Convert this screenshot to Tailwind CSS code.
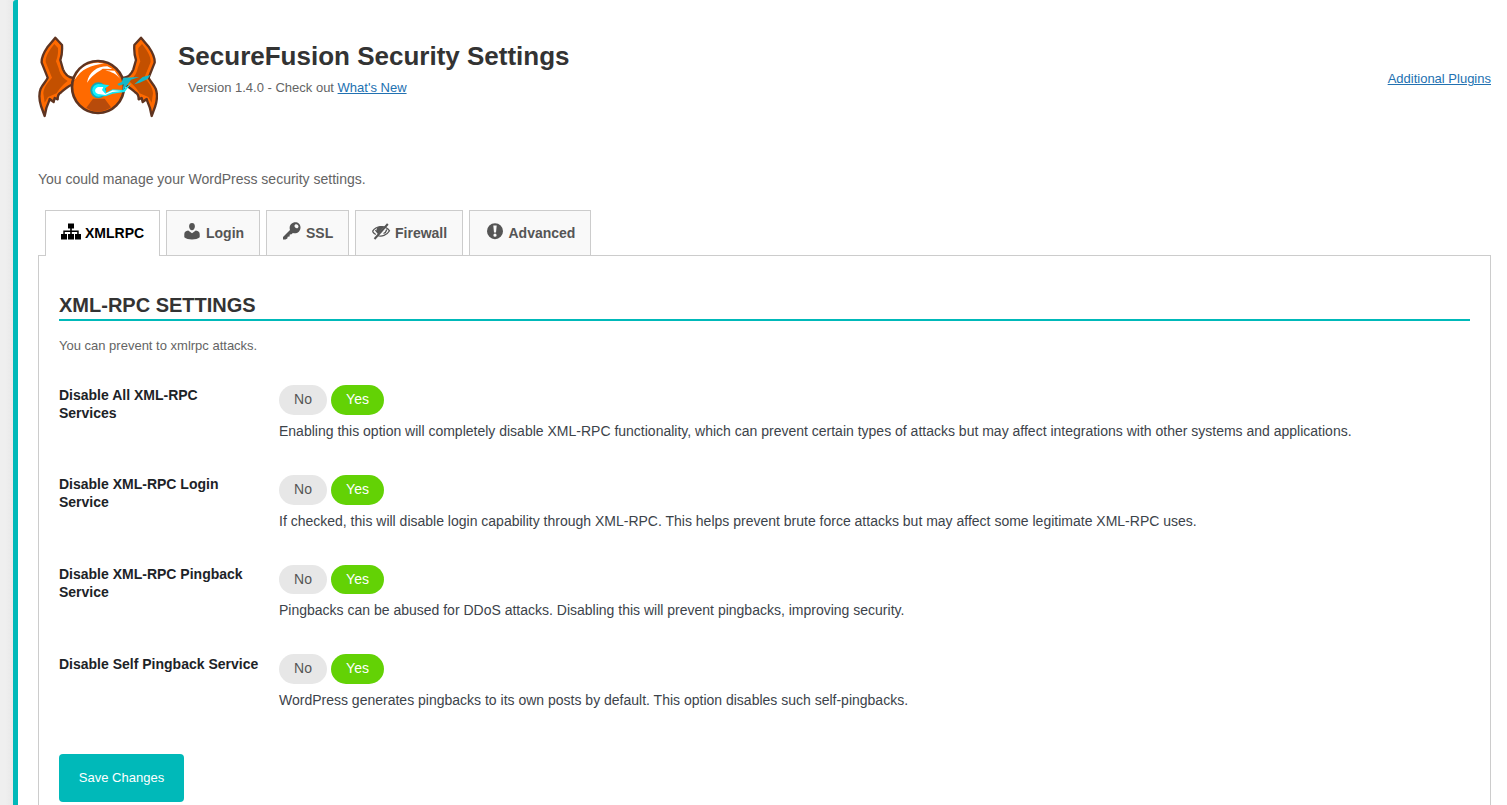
<!DOCTYPE html>
<html lang="en">
<head>
<meta charset="utf-8">
<title>SecureFusion Security Settings</title>
<script src="https://cdn.jsdelivr.net/npm/@tailwindcss/browser@4"></script>
</head>
<body class="bg-[#efefef] font-['Liberation_Sans',Arial,sans-serif] text-[#3c434a] overflow-hidden">
<div class="flex h-[805px] overflow-hidden">
  <div class="w-[13px] shrink-0 bg-linear-to-r from-[#efefef] from-40% to-[#e9e9e9]"></div>
  <main class="grow rounded-tl-[3px] border-l-[5px] border-[#00b9b9] bg-white pl-5 pr-4">
    <header class="flex h-[170px] pt-9">
      <svg class="h-[82px] w-[120px] shrink-0" viewBox="24 18 360 246">
        <defs>
          <g id="wing">
            <path stroke="#5f3420" stroke-width="7" stroke-linejoin="round" fill="#ff6a00" d="M76 23 L52 52 C41 68 34 82 35 98 L53 143 C52 150 39 162 32 176 C26 192 28 212 33 228 L44 258 C47 238 51 226 57 214 L59 207 L71 216 L74 204 L83 208 C83 197 86 191 92 188 C101 182 113 166 130 163 L130 144 C114 142 104 131 99 118 L91 90 C96 76 97 60 96 45Z"/>
            <path fill="#c35000" d="M73 42 C59 59 46 79 47 96 L66 143 C52 158 41 173 40 190 L44 218 L54 201 L68 195 L80 190 C86 180 94 168 113 153 C98 145 89 131 86 115 L78 94 C84 78 85 64 84 54Z"/>
          </g>
        </defs>
        <use href="#wing"/>
        <use href="#wing" transform="translate(409 0) scale(-1 1)"/>
        <circle cx="204" cy="171" r="78" fill="#ff6a00" stroke="#5f3420" stroke-width="8"/>
        <path fill="#b84b0b" d="M189 206 L224 206 L243 232 Q204 258 169 233Z"/>
        <path fill="#fff" d="M133 151 C143 117 170 98 204 98 L222 101 C184 105 153 116 133 151Z M171 158 C177 126 201 109 232 109 L247 117 L218 116 C212 123 192 127 171 158Z"/>
        <path fill="#fff" d="M226 121 L254 122 L270 146 C258 132 246 126 226 121Z"/>
        <circle cx="205" cy="181" r="24" fill="#14a7b5"/>
        <circle cx="206" cy="181" r="19" fill="#13f0ff"/>
        <path fill="#12e9f5" d="M211 162 L238 166 L224 176 L229 188 L248 178 L278 180 L304 160 L284 186 L248 191 L227 199 L207 197Z"/>
        <path fill="#fff" d="M204 171 L220 171 L216 180 L226 191 L248 181 L274 183 L247 186 L226 195 L204 192 C192 188 193 175 204 171Z"/>
        <path fill="#14b8c9" d="M262 162 L275 156 L280 143 L328 141 L303 149 L290 167 L277 182 L281 163 L267 167Z M313 163 L338 141 L361 135 L353 147 L329 158Z"/>
      </svg>
      <div class="ml-5 grow pt-1">
        <h1 class="text-[26px] leading-8 font-bold text-[#333]">SecureFusion Security Settings</h1>
        <p class="mt-[6px] ml-[10px] text-[13px] leading-5 text-[#646464]">Version 1.4.0 - Check out <a class="text-[#2271b1] underline" href="#">What's New</a></p>
      </div>
      <a class="mt-[33px] h-5 text-[13px] leading-5 text-[#2271b1] underline" href="#">Additional Plugins</a>
    </header>
    <p class="h-10 text-sm leading-[19px] text-[#646464]">You could manage your WordPress security settings.</p>
    <nav class="relative z-10 -mb-px ml-[7px] flex h-[46px] items-start gap-[6px] text-sm font-bold text-[#555]">
      <a class="flex h-[46px] w-[115px] items-center border border-b-0 border-[#ccc] bg-white pb-px pl-[15px] text-black" href="#">
        <svg class="mb-[3px] h-5 w-5" viewBox="0 0 20 20" fill="currentColor"><path d="M7 1.500h6v5H7zM9.200 6h1.600v7H9.200zM2.300 8.500h15.400V10H2.300zM2.300 9h1.500v4H2.300zM16.200 9h1.500v4h-1.500zM0 12h6v5.500H0zM7 12h6v5.500H7zM14 12h6v5.500h-6z"/></svg>
        <span class="ml-1">XMLRPC</span></a>
      <a class="flex h-[45px] w-[94px] items-center border border-b-0 border-[#ccc] bg-[#f9f9f9] pl-[15px]" href="#">
        <svg class="mb-[3px] h-5 w-5" viewBox="0 0 20 20" fill="currentColor"><path d="M7.100 4.300C7.100 2.200 8.200 1 10 1s2.900 1.200 2.900 3.300S11.700 8.300 10 8.300 7.100 6.400 7.100 4.300ZM6.200 8.600 10 11.200l3.800-2.600c2.700.3 3.900 1.700 3.900 3.700v2.900c-1.800 1.500-4.600 2.200-7.700 2.200s-5.900-.7-7.700-2.200v-2.900c0-2 1.200-3.400 3.900-3.700Z"/></svg>
        <span class="ml-1">Login</span></a>
      <a class="flex h-[45px] w-[83px] items-center border border-b-0 border-[#ccc] bg-[#f9f9f9] pl-[15px]" href="#">
        <svg class="mb-[3px] h-5 w-5" viewBox="0 0 20 20" fill="currentColor"><path fill-rule="evenodd" d="M17 1.800c2.100 2.100 2 5.700-.2 7.900-1.700 1.600-4 2-5.900 1.200L9.500 12.300l-1.700.2-.3 2-1.800.2-.4 1.700L3.500 17.500H1v-2.600L8 8C7.300 6 7.600 3.700 9.200 2.100c2.200-2.200 5.700-2.400 7.800-.3Zm-1.200 1.200c-.8-.8-2-.9-2.800-.2s-.6 1.900.2 2.700 2 1 2.800.2.600-1.900-.2-2.700Z"/></svg>
        <span class="ml-1">SSL</span></a>
      <a class="flex h-[45px] w-[108px] items-center border border-b-0 border-[#ccc] bg-[#f9f9f9] pl-[15px]" href="#">
        <svg class="mb-[3px] h-5 w-5" viewBox="0 0 20 20" fill="none" stroke="currentColor"><path stroke-width="1.300" d="M1.500 9.300C5 3.500 14.500 2.700 18.500 8.800 15.800 13.500 10.500 15 6.500 13.500M1.500 9.300c.8 1.300 2 2.500 3.300 3.200M4.500 8c.8 1.700 1.800 2.700 3.200 3.300M15.800 7.500c-.5 2-1.600 3.400-3.300 4"/><path fill="currentColor" stroke="none" d="M5.500 7.500C6 5 8.500 3.800 11 4.100l2 .9-6 7C5.800 10.800 5.200 9 5.500 7.500Z"/><path stroke-width="2" d="M3.500 17 16.800 2"/></svg>
        <span class="ml-1">Firewall</span></a>
      <a class="flex h-[45px] w-[122px] items-center border border-b-0 border-[#ccc] bg-[#f9f9f9] pl-[15px]" href="#">
        <svg class="mb-[3px] h-5 w-5" viewBox="0 0 20 20" fill="currentColor"><path fill-rule="evenodd" d="M10 1.200a8 8 0 1 1 0 16 8 8 0 0 1 0-16ZM8.300 3.500 9 10.500h2l.7-7Zm1.700 8.100a1.600 1.600 0 1 0 0 3.200 1.600 1.600 0 0 0 0-3.200Z"/></svg>
        <span class="ml-[3.500px]">Advanced</span></a>
    </nav>
    <section class="h-[600px] border border-[#ccc] px-5 pt-[34px]">
      <h2 class="h-[31px] border-b-2 border-[#00b9b9] text-xl leading-[30px] font-bold text-[#333]">XML-RPC SETTINGS</h2>
      <p class="mt-[15px] h-[49.300px] text-[13px] leading-5 text-[#646464]">You can prevent to xmlrpc attacks.</p>
      <div class="grid grid-cols-[200px_1fr] gap-x-5 text-sm">
        <h3 class="h-[89.670px] pt-[0.400px] leading-[18px] font-bold text-[#1d2327]">Disable All XML-RPC<br>Services</h3>
        <div>
          <div class="flex h-[30px] gap-1 text-center leading-[28px]"><span class="w-12 rounded-full bg-[#e7e7e7] text-[#555]">No</span><span class="w-[53px] rounded-full bg-[#63d205] text-white">Yes</span></div>
          <p class="mt-[5.700px] leading-5">Enabling this option will completely disable XML-RPC functionality, which can prevent certain types of attacks but may affect integrations with other systems and applications.</p>
        </div>
        <h3 class="h-[89.670px] pt-[0.400px] leading-[18px] font-bold text-[#1d2327]">Disable XML-RPC Login<br>Service</h3>
        <div>
          <div class="flex h-[30px] gap-1 text-center leading-[28px]"><span class="w-12 rounded-full bg-[#e7e7e7] text-[#555]">No</span><span class="w-[53px] rounded-full bg-[#63d205] text-white">Yes</span></div>
          <p class="mt-[5.700px] leading-5">If checked, this will disable login capability through XML-RPC. This helps prevent brute force attacks but may affect some legitimate XML-RPC uses.</p>
        </div>
        <h3 class="h-[89.670px] pt-[0.400px] leading-[18px] font-bold text-[#1d2327]">Disable XML-RPC Pingback<br>Service</h3>
        <div>
          <div class="flex h-[29.600px] gap-1 text-center leading-[28px]"><span class="w-12 rounded-full bg-[#e7e7e7] text-[#555]">No</span><span class="w-[53px] rounded-full bg-[#63d205] text-white">Yes</span></div>
          <p class="mt-[6.100px] leading-5">Pingbacks can be abused for DDoS attacks. Disabling this will prevent pingbacks, improving security.</p>
        </div>
        <h3 class="h-[99.700px] pt-[0.400px] leading-[18px] font-bold whitespace-nowrap text-[#1d2327]">Disable Self Pingback Service</h3>
        <div>
          <div class="flex h-[30px] gap-1 text-center leading-[28px]"><span class="w-12 rounded-full bg-[#e7e7e7] text-[#555]">No</span><span class="w-[53px] rounded-full bg-[#63d205] text-white">Yes</span></div>
          <p class="mt-[5.700px] leading-5">WordPress generates pingbacks to its own posts by default. This option disables such self-pingbacks.</p>
        </div>
      </div>
      <button class="h-12 w-[125px] rounded-[4px] bg-[#00b9b9] text-[13px] text-white">Save Changes</button>
    </section>
  </main>
</div>
</body>
</html>
